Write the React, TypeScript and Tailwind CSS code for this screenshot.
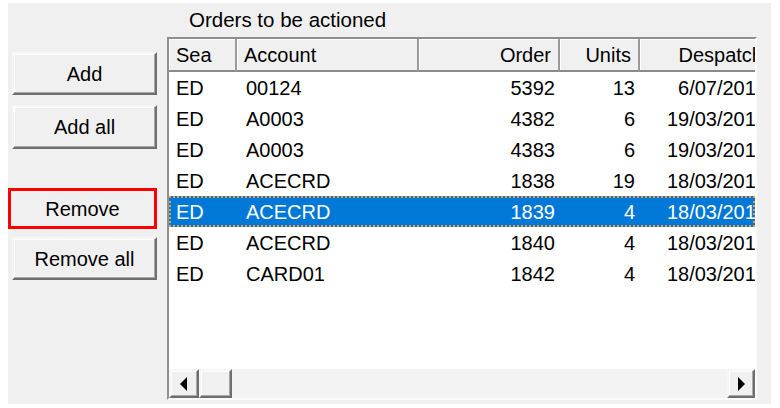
import React from "react";

type Row = { sea: string; account: string; order: string; units: string; despatch: string };

const rows: Row[] = [
  { sea: "ED", account: "00124", order: "5392", units: "13", despatch: "6/07/2016" },
  { sea: "ED", account: "A0003", order: "4382", units: "6", despatch: "19/03/2016" },
  { sea: "ED", account: "A0003", order: "4383", units: "6", despatch: "19/03/2016" },
  { sea: "ED", account: "ACECRD", order: "1838", units: "19", despatch: "18/03/2016" },
  { sea: "ED", account: "ACECRD", order: "1839", units: "4", despatch: "18/03/2016" },
  { sea: "ED", account: "ACECRD", order: "1840", units: "4", despatch: "18/03/2016" },
  { sea: "ED", account: "CARD01", order: "1842", units: "4", despatch: "18/03/2016" },
];

const raised =
  "border-2 border-t-[#f6f6f6] border-l-[#f6f6f6] border-r-[#6e6e6e] border-b-[#6e6e6e] shadow-[inset_-1px_-1px_0_#a8a8a8,inset_1px_1px_0_#ffffff]";

function WinButton({ label, className }: { label: string; className: string }) {
  return (
    <button
      className={`ml-[4px] flex w-[145px] items-center justify-center bg-[#f0f0f0] text-[20px] text-black ${raised} ${className}`}
    >
      {label}
    </button>
  );
}

function HeaderCell({ label, width, right }: { label: string; width: string; right?: boolean }) {
  return (
    <div
      className={`flex h-full shrink-0 items-center border-r-2 border-r-[#9a9a9a] border-b-2 border-b-[#8a8a8a] bg-[#f0f0f0] shadow-[inset_1px_1px_0_#ffffff] whitespace-nowrap ${width} ${
        right ? "justify-end pr-[7px]" : "pl-[7px]"
      }`}
    >
      {label}
    </div>
  );
}

function Arrow({ dir }: { dir: "left" | "right" }) {
  return (
    <svg width="8" height="14" viewBox="0 0 8 14">
      {dir === "left" ? <polygon points="7,0 7,14 0,7" fill="#000" /> : <polygon points="1,0 1,14 8,7" fill="#000" />}
    </svg>
  );
}

export default function App() {
  return (
    <main className="h-[408px] w-[780px] overflow-hidden bg-white pt-[3px] pl-[8px] font-['Liberation_Sans',Arial,sans-serif] text-black">
      <div className="flex h-[401px] w-[763px] bg-[#f0f0f0]">
        {/* buttons */}
        <div className="flex w-[159px] shrink-0 flex-col pt-[49px]">
          <WinButton label="Add" className="h-[43px]" />
          <WinButton label="Add all" className="mt-[10px] h-[44px]" />
          <button className="mt-[39px] flex h-[41px] w-[149px] items-center justify-center border-[3px] border-[#ff0000] bg-[#f0f0f0] text-[20px]">
            Remove
          </button>
          <WinButton label="Remove all" className="mt-[8px] h-[43px]" />
        </div>

        {/* list */}
        <div className="flex w-[590px] flex-col">
          <p className="h-[34px] pt-[5px] pl-[22px] text-[20.5px] leading-[24px]">Orders to be actioned</p>

          <div className="flex h-[363px] flex-col overflow-hidden border-2 border-t-[#8f8f8f] border-l-[#8f8f8f] border-r-[#fbfbfb] border-b-[#fbfbfb] bg-white text-[20px]">
            <div className="flex h-[33px] shrink-0">
              <HeaderCell label="Sea" width="w-[68px]" />
              <HeaderCell label="Account" width="w-[182px]" />
              <HeaderCell label="Order" width="w-[141px]" right />
              <HeaderCell label="Units" width="w-[80px]" right />
              <HeaderCell label="Despatch" width="w-[132px]" right />
            </div>

            {rows.map((r, i) => {
              const selected = i === 4;
              return (
                <div
                  key={r.order}
                  className={`flex h-[31px] shrink-0 items-center ${
                    selected ? "border-2 border-dotted border-[#f29a38] bg-[#0078d7] text-white" : "border-2 border-transparent"
                  }`}
                >
                  <div className="w-[68px] shrink-0 pl-[5px]">{r.sea}</div>
                  <div className="w-[182px] shrink-0 pl-[7px]">{r.account}</div>
                  <div className="w-[141px] shrink-0 pr-[7px] text-right">{r.order}</div>
                  <div className="w-[80px] shrink-0 pr-[7px] text-right">{r.units}</div>
                  <div className="w-[132px] shrink-0 pr-[7px] text-right whitespace-nowrap">{r.despatch}</div>
                </div>
              );
            })}

            <div className="flex-1" />

            {/* horizontal scrollbar */}
            <div className="flex h-[29px] shrink-0 bg-[#f3f3f3]">
              <div className={`flex w-[30px] items-center justify-center bg-[#f0f0f0] ${raised}`}>
                <Arrow dir="left" />
              </div>
              <div className={`w-[33px] bg-[#f0f0f0] ${raised}`} />
              <div className="flex-1" />
              <div className={`flex w-[28px] items-center justify-center bg-[#f0f0f0] ${raised}`}>
                <Arrow dir="right" />
              </div>
            </div>
          </div>
        </div>
      </div>
    </main>
  );
}
